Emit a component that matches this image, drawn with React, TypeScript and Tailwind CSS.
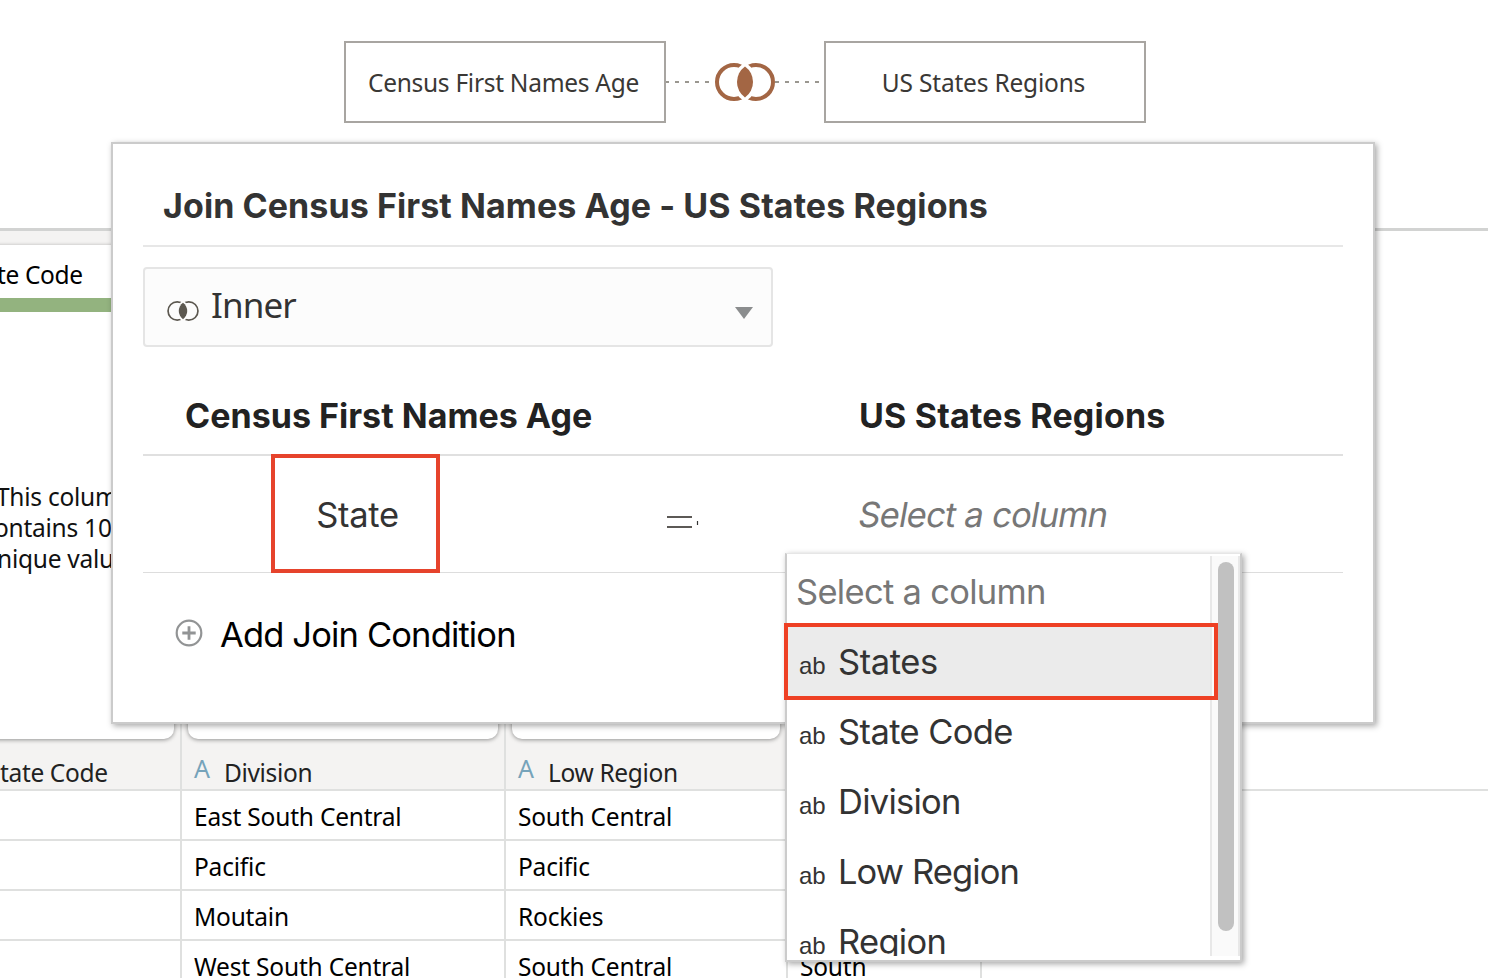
import React from "react";

const oracle = "font-['Noto_Sans','Open_Sans',sans-serif]";
const system = "font-['Inter','Liberation_Sans',sans-serif]";

function JoinIcon({ className, color, gap, thin }: { className: string; color: string; gap: string; thin?: boolean }) {
  const r = thin ? 17.4 : 17;
  const w = thin ? 3.2 : 4;
  return (
    <svg className={className} viewBox="0 0 60 38" fill="none" overflow="visible">
      <circle cx="19" cy="19" r={r} stroke={color} strokeWidth={w} />
      <circle cx="41" cy="19" r={r} stroke={color} strokeWidth={w} />
      <path d="M30 3.5A19 19 0 0 1 30 34.5A19 19 0 0 1 30 3.5Z" fill={gap} stroke={gap} strokeWidth="7" />
      <path d="M30 3.5A19 19 0 0 1 30 34.5A19 19 0 0 1 30 3.5Z" fill={color} />
    </svg>
  );
}

function Dashes({ className, offset }: { className: string; offset: number }) {
  return (
    <svg className={className} fill="none">
      <line x1="0" y1="1" x2="49" y2="1" stroke="#9a9790" strokeWidth="2" strokeDasharray="4 6" strokeDashoffset={offset} />
    </svg>
  );
}

function Node({ children, spacing }: { children: string; spacing: string }) {
  return (
    <div className="flex h-[82px] w-[322px] shrink-0 items-center justify-center border-2 border-[#a8a5a1] bg-white pt-[2px] text-[24.5px] text-[#3a3835]">
      <span className={"whitespace-nowrap " + spacing}>{children}</span>
    </div>
  );
}

const columns = [
  {
    width: "w-[182px]",
    card: "-ml-4 mr-[6px]",
    label: "tate Code",
    icon: false,
    rows: ["", "", "", ""],
  },
  {
    width: "w-[324px]",
    card: "ml-[6px] mr-[6px]",
    label: "Division",
    icon: true,
    rows: ["East South Central", "Pacific", "Moutain", "West South Central"],
  },
  {
    width: "w-[282px]",
    card: "ml-[6px] mr-[6px]",
    label: "Low Region",
    icon: true,
    rows: ["South Central", "Pacific", "Rockies", "South Central"],
  },
  {
    width: "w-[194px]",
    card: "ml-[6px] mr-[6px]",
    label: "",
    icon: false,
    rows: ["", "", "", "South"],
  },
];

const options = [
  { name: "States", spacing: "tracking-[-0.4px]" },
  { name: "State Code", spacing: "tracking-[-0.6px]" },
  { name: "Division", spacing: "tracking-[-0.75px]" },
  { name: "Low Region", spacing: "tracking-[-0.9px]" },
  { name: "Region", spacing: "tracking-[-0.7px]" },
];

function DataGrid() {
  return (
    <div className="flex h-[750px] w-full flex-col overflow-hidden border-t-[3px] border-[#d2d3d2]">
      <div className="flex h-[558px] shrink-0">
        {columns.map((c, i) => (
          <div key={i} className={"flex h-full shrink-0 flex-col border-r-2 border-[#dfe0df] bg-[#f4f3f2] " + c.width}>
            <div className={"mt-[14px] flex h-[494px] shrink-0 flex-col rounded-[10px] bg-white shadow-[0_1px_4px_rgba(0,0,0,0.4)] " + c.card}>
              {i === 0 && (
                <div className="flex flex-col pl-4">
                  <div className="-ml-[3px] flex h-[53px] items-center pt-2 text-[24.5px] tracking-[-0.35px] text-black">te Code</div>
                  <div className="h-[14px] bg-[#93b37f]" />
                  <div className="mt-[169px] flex flex-col text-[24.5px] leading-[31px] tracking-[-0.25px] whitespace-nowrap text-[#111]">
                    <span className="-ml-[4px]">This column</span>
                    <span className="-ml-[6px]">ontains 100</span>
                    <span className="-ml-[3px]">nique values</span>
                  </div>
                </div>
              )}
            </div>
            <div className="flex h-[50px] items-center pt-[19px] text-[24.5px] tracking-[-0.35px] text-[#222]">
              {c.icon && <span className="-mt-[10px] ml-[12px] w-[30px] text-[25px] text-[#76a3ba]">A</span>}
              <span className="whitespace-nowrap">{c.label}</span>
            </div>
          </div>
        ))}
      </div>
      <div className="flex shrink-0 border-t-2 border-[#dfe0df]">
        {columns.map((c, i) => (
          <div key={i} className={"shrink-0 border-r-2 border-[#dfe0df] " + c.width}>
            {c.rows.map((r, j) => (
              <div key={j} className="flex h-[50px] items-center border-b-2 border-[#dfe0df] pt-[5px] pl-3 text-[24.5px] tracking-[-0.2px] whitespace-nowrap text-black">
                {r}
              </div>
            ))}
          </div>
        ))}
      </div>
    </div>
  );
}

function ColumnMenu() {
  return (
    <div className={"absolute top-[553px] left-[785px] h-[409px] w-[457px] border-2 border-t border-[#cbcbcb] border-t-[#e6e6e6] bg-white shadow-[2px_2px_6px_rgba(0,0,0,0.35)] " + system}>
      <div className="mt-[2px] flex h-[400px] overflow-hidden">
        <div className="flex w-[423px] flex-col">
          <div className="flex h-[71px] shrink-0 items-center pl-[9px] text-[34.5px] tracking-[-0.7px] text-[#777]">Select a column</div>
          {options.map((o, i) => (
            <div key={o.name} className={"flex h-[70px] shrink-0 items-baseline pl-3 text-[34.5px] leading-[70px] text-[#333] " + (i === 0 ? "bg-[#ebebeb]" : "bg-white")}>
              <span className="w-[39px] text-[24px] font-['Liberation_Sans',sans-serif]">ab</span>
              <span className={o.spacing}>{o.name}</span>
            </div>
          ))}
        </div>
        <div className="flex w-[30px] justify-center border-x-2 border-[#e8e8e8] bg-[#fafafa] pt-[6px] pl-[2px]">
          <div className="h-[369px] w-4 rounded-full bg-[#c1c1c1]" />
        </div>
      </div>
      <div className="absolute top-[69px] -left-[3px] h-[77px] w-[434px] border-4 border-[#ee4024]" />
    </div>
  );
}

function JoinDialog() {
  return (
    <div className={"absolute top-[142px] left-[111px] flex h-[582px] w-[1264px] flex-col border-2 border-[#cbcbcb] bg-white px-[30px] shadow-[2px_2px_6px_rgba(0,0,0,0.35)] " + system}>
      <div className="flex h-[103px] shrink-0 items-center border-b-2 border-[#e7e7e7] pt-[22px] pl-[20px] text-[34px] font-bold whitespace-nowrap text-[#333]">
        <span className="tracking-[0.08px]">Join Census First Names Age - US States Regions</span>
      </div>
      <div className={"mt-[20px] flex h-[80px] w-[630px] shrink-0 items-center rounded border-2 border-[#e5e5e5] bg-[#fcfcfc] pl-[22px] " + oracle}>
        <JoinIcon className="mt-[8px] h-[20px] w-[32px]" color="#5c5850" gap="#fcfcfc" thin />
        <span className="-mt-[3px] ml-[12px] text-[35px] tracking-[-0.9px] text-[#333]">Inner</span>
        <svg className="mt-[11px] mr-[18px] ml-auto h-[12px] w-[18px]" viewBox="0 0 18 12">
          <path d="M0 0H18L9 12Z" fill="#8b8d8e" />
        </svg>
      </div>
      <div className="flex h-[109px] shrink-0 items-center border-b-2 border-[#e0e0e0] pt-[30px] text-[34px] font-bold whitespace-nowrap text-[#222]">
        <span className="w-[717px] pl-[42px] tracking-[0.02px]">Census First Names Age</span>
        <span className="-ml-px tracking-[0.2px]">US States Regions</span>
      </div>
      <div className="flex h-[117px] shrink-0 items-center border-b border-[#ddd] text-[34.5px] whitespace-nowrap">
        <div className="-mt-[2px] -mb-px ml-[128px] flex h-[119px] w-[169px] items-center justify-center border-4 border-[#e6432c] pt-[2px] pl-[4px] text-[#333]">
          <span className="tracking-[-0.3px]">State</span>
        </div>
        <svg className="mt-[15px] ml-[226px] h-[16px] w-[34px]" fill="none">
          <path d="M1 3H26M1 13H26" stroke="#5c5956" strokeWidth="2" />
          <path d="M31.5 7V11" stroke="#333" strokeWidth="1.2" />
        </svg>
        <span className="ml-[159px] inline-block -skew-x-[10deg] pt-[2px] tracking-[-0.75px] text-[#777]">Select a column</span>
      </div>
      <div className="mt-[40px] flex h-[44px] items-center pl-[32px]">
        <svg className="-mt-[5px] h-[28px] w-[28px]" viewBox="0 0 28 28" fill="none" stroke="#929495">
          <circle cx="14" cy="14" r="12.3" strokeWidth="2.2" />
          <path d="M7.3 14H20.7M14 7.3V20.7" strokeWidth="2.8" />
        </svg>
        <span className="ml-[17px] text-[34.5px] tracking-[-0.85px] text-black">Add Join Condition</span>
      </div>
    </div>
  );
}

export default function App() {
  return (
    <div className={"relative flex h-[978px] w-[1488px] flex-col overflow-hidden bg-white " + oracle}>
      <div className="flex h-[228px] shrink-0 items-start pt-[41px] pl-[344px]">
        <Node spacing="tracking-[-0.28px] pr-[3px]">Census First Names Age</Node>
        <div className="flex h-[82px] w-[158px] items-center">
          <Dashes className="h-[2px] w-[49px]" offset={1} />
          <JoinIcon className="-mt-px h-[38px] w-[60px]" color="#a36644" gap="#ffffff" />
          <Dashes className="h-[2px] w-[49px]" offset={0} />
        </div>
        <Node spacing="tracking-[-0.2px] pr-[3px]">US States Regions</Node>
      </div>
      <DataGrid />
      <JoinDialog />
      <ColumnMenu />
    </div>
  );
}
